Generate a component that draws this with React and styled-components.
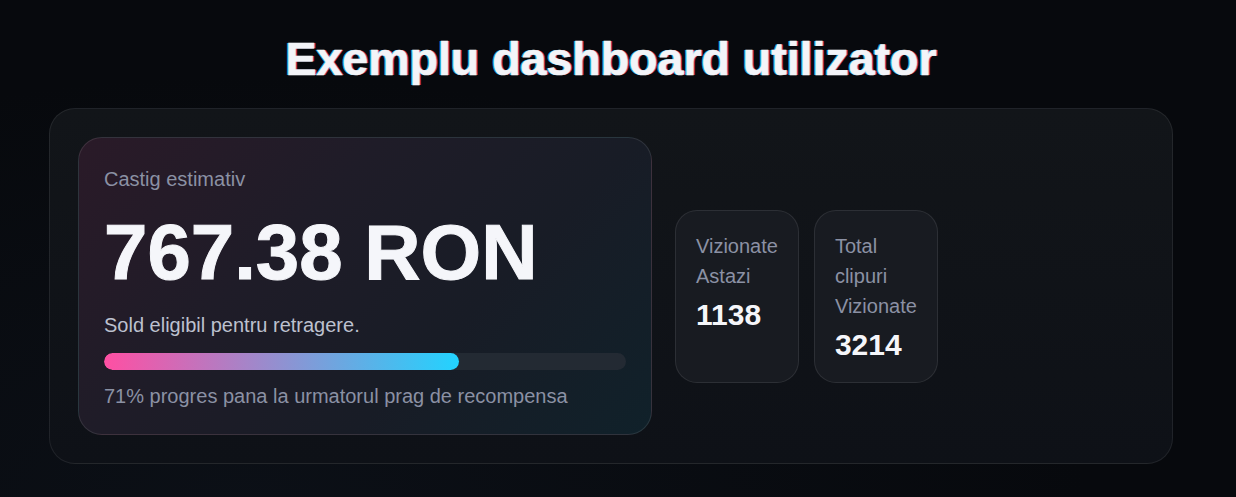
import React from "react";
import styled, { createGlobalStyle } from "styled-components";

const GlobalStyle = createGlobalStyle`
  html, body {
    margin: 0;
    padding: 0;
    background: #07090d;
  }
  body {
    font-family: "Liberation Sans", Arial, sans-serif;
    color: #f4f5f9;
    min-height: 497px;
    background:
      radial-gradient(ellipse at 20% 100%, rgba(20, 28, 40, 0.35), transparent 60%),
      #07090d;
  }
`;

const Page = styled.div`
  padding: 33px 14px 34px 0;
`;

const Wrapper = styled.div`
  max-width: 1124px;
  margin: 0 auto;
`;

const Title = styled.h1`
  margin: 0 0 22px;
  text-align: center;
  font-size: 46.5px;
  font-weight: 700;
  line-height: 53px;
  color: #f3f4f8;
  -webkit-text-stroke: 0.7px #f3f4f8;
  text-shadow: -1.5px 0 rgba(34, 211, 255, 0.75), 1.5px 0 rgba(255, 79, 163, 0.75);
`;

const Panel = styled.section`
  display: flex;
  align-items: flex-start;
  gap: 23px;
  padding: 28px;
  border: 1px solid rgba(255, 255, 255, 0.08);
  border-radius: 26px;
  background: linear-gradient(180deg, #121519 0%, #0e1117 100%);
`;

const EarningsCard = styled.div`
  width: 574px;
  box-sizing: border-box;
  padding: 29px 25px 26px;
  border: 1px solid rgba(255, 255, 255, 0.1);
  border-radius: 24px;
  background: linear-gradient(
    135deg,
    #2a1a28 0%,
    #1f1c28 35%,
    #181c26 65%,
    #10212a 100%
  );
`;

const Label = styled.div`
  font-size: 20px;
  line-height: ${(p) => p.$lh || "24px"};
  color: ${(p) => p.$color || "#8b91a4"};
`;

const Amount = styled.div`
  margin-top: 18px;
  font-size: 78px;
  font-weight: 700;
  line-height: 86px;
  color: #f5f6fa;
  -webkit-text-stroke: 1px #f5f6fa;
`;

const Note = styled(Label)`
  margin-top: ${(p) => p.$mt || 0}px;
`;

const Track = styled.div`
  margin-top: 16px;
  height: 17px;
  border-radius: 9px;
  background: #232a33;
  overflow: hidden;
`;

const Fill = styled.div`
  height: 100%;
  border-radius: 9px;
  background: linear-gradient(90deg, #ff4fa3, #22d3ff);
`;

const StatRow = styled.div`
  display: flex;
  gap: 15px;
  margin-top: 73px;
`;

const StatCard = styled.div`
  width: min-content;
  padding: 20px 20px 19px;
  border: 1px solid rgba(255, 255, 255, 0.09);
  border-radius: 22px;
  background: #181b21;
`;

const StatValue = styled.div`
  margin-top: 6px;
  font-size: 30px;
  font-weight: 700;
  line-height: 36px;
  color: #f5f6fa;
`;

const stats = [
  { label: "Vizionate Astazi", value: "1138" },
  { label: "Total clipuri Vizionate", value: "3214" },
];

const App = () => {
  const progress = 68;

  return (
    <>
      <GlobalStyle />
      <Page>
        <Wrapper>
          <Title>Exemplu dashboard utilizator</Title>
          <Panel>
            <EarningsCard>
              <Label>Castig estimativ</Label>
              <Amount>767.38 RON</Amount>
              <Note $mt={18} $color="#bdc1cf">
                Sold eligibil pentru retragere.
              </Note>
              <Track>
                <Fill style={{ width: `${progress}%` }} />
              </Track>
              <Note $mt={14}>
                71% progres pana la urmatorul prag de recompensa
              </Note>
            </EarningsCard>
            <StatRow>
              {stats.map((s) => (
                <StatCard key={s.label}>
                  <Label $lh="30px">{s.label}</Label>
                  <StatValue>{s.value}</StatValue>
                </StatCard>
              ))}
            </StatRow>
          </Panel>
        </Wrapper>
      </Page>
    </>
  );
};

export default App;
